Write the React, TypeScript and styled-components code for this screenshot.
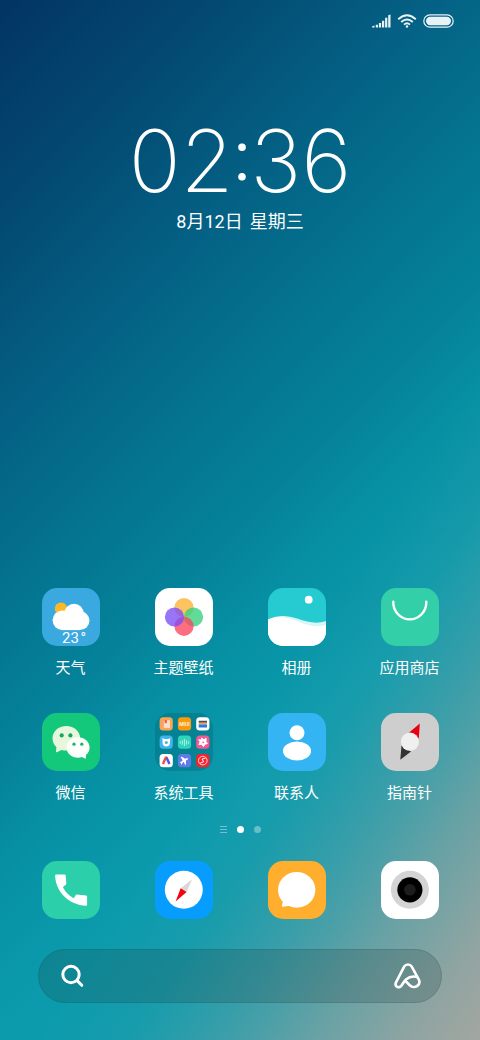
import React from "react";
import styled, { createGlobalStyle } from "styled-components";

const GlobalStyle = createGlobalStyle`
  *, *::before, *::after { box-sizing: border-box; }
  body { margin: 0; }
  button { border: 0; padding: 0; background: none; color: inherit; font: inherit; cursor: pointer; }
`;

const Screen = styled.main`
  display: flex;
  flex-direction: column;
  min-height: 100vh;
  padding-bottom: 37px;
  color: #fff;
  font-family: Roboto, "Noto Sans CJK SC", sans-serif;
  background:
    linear-gradient(
      124deg,
      rgba(163, 166, 160, 0) 62%,
      rgba(163, 166, 160, 0.08) 70%,
      rgba(163, 166, 160, 0.28) 77%,
      rgba(163, 166, 160, 0.42) 81%,
      rgba(163, 166, 160, 0.62) 86%,
      rgba(163, 166, 160, 0.87) 94%,
      rgba(163, 166, 160, 1) 100%
    ),
    linear-gradient(
      135deg,
      #033463 0%,
      #034a72 15%,
      #046084 28%,
      #047490 40%,
      #05829a 50%,
      #0791a4 58%,
      #0b9bad 68%
    );
`;

const StatusBar = styled.header`
  display: flex;
  justify-content: flex-end;
  align-items: center;
  gap: 6px;
  height: 41px;
  padding-right: 26px;
`;

const Glyph = styled.svg<{ $w: number; $h: number }>`
  display: block;
  width: ${(p) => p.$w}px;
  height: ${(p) => p.$h}px;
`;

const Clock = styled.section`
  display: flex;
  flex-direction: column;
  align-items: center;
  padding-top: 80px;
`;

const Time = styled.time`
  display: flex;
  align-items: flex-start;
  font-family: Inter, Roboto, sans-serif;
  font-size: 86px;
  font-weight: 200;
  line-height: 80px;
`;

const Colon = styled.span`
  font-family: Roboto, sans-serif;
  font-size: 68px;
  font-weight: 400;
  line-height: 72px;
`;

const DateLine = styled.p`
  display: flex;
  gap: 7px;
  margin: 8px 0 0;
  font-size: 18px;
  line-height: 26px;
`;

const Apps = styled.nav`
  display: grid;
  grid-template-columns: repeat(4, 1fr);
  row-gap: 33px;
  margin-top: auto;
  padding: 0 14px;
`;

const AppButton = styled.button`
  display: flex;
  flex-direction: column;
  align-items: center;
  gap: 10px;
`;

const Label = styled.span`
  font-size: 15px;
  line-height: 24px;
`;

const Tile = styled.svg<{ $bg: string }>`
  display: block;
  width: 58px;
  height: 58px;
  border-radius: 15px;
  background: ${(p) => p.$bg};
`;

const Pager = styled.div`
  display: flex;
  justify-content: center;
  align-items: center;
  gap: 10px;
  height: 8px;
  margin: 20px 0 28px;
`;

const Dot = styled.span<{ $active?: boolean }>`
  width: 7px;
  height: 7px;
  border-radius: 50%;
  background: ${(p) => (p.$active ? "#fff" : "rgba(255, 255, 255, 0.35)")};
`;

const Dock = styled.nav`
  display: grid;
  grid-template-columns: repeat(4, 1fr);
  padding: 0 14px;
`;

const SearchBar = styled.form`
  display: flex;
  align-items: center;
  gap: 16px;
  height: 54px;
  margin: 30px 38px 0;
  padding: 0 20px 0 22px;
  border: 1px solid rgba(40, 70, 70, 0.16);
  border-radius: 27px;
  background: rgba(30, 60, 60, 0.22);
`;

const SearchInput = styled.input`
  flex: 1;
  min-width: 0;
  border: 0;
  outline: 0;
  background: transparent;
  color: #fff;
  font: inherit;
`;

const WeatherIcon = () => (
  <Tile $bg="#3aa9e0" viewBox="0 0 58 58" aria-hidden="true">
    <circle cx="19" cy="20.7" r="6.2" fill="#fdb827" />
    <g fill="#fff">
      <circle cx="20.5" cy="32.3" r="9.9" />
      <circle cx="32" cy="25.3" r="9.6" />
      <circle cx="38" cy="32.6" r="9.5" />
      <rect x="20" y="26" width="18" height="16.1" />
    </g>
    <text x="20" y="54.5" fill="#fff" fontSize="15" fontFamily="Roboto, sans-serif">23</text>
    <text x="38.5" y="55" fill="#fff" fontSize="15" fontFamily="Roboto, sans-serif">°</text>
  </Tile>
);

const ThemesIcon = () => (
  <Tile $bg="#fff" viewBox="0 0 58 58" aria-hidden="true">
    <circle cx="29" cy="19.5" r="9.6" fill="#fcb63f" fillOpacity=".82" />
    <circle cx="38.5" cy="29" r="9.6" fill="#36cf7d" fillOpacity=".78" />
    <circle cx="29" cy="38.3" r="9.6" fill="#fb4660" fillOpacity=".78" />
    <circle cx="19.5" cy="29" r="9.6" fill="#7b4df3" fillOpacity=".78" />
  </Tile>
);

const GalleryIcon = () => (
  <Tile $bg="#25cbd1" viewBox="0 0 58 58" aria-hidden="true">
    <circle cx="40.7" cy="11.7" r="3.9" fill="#fff" />
    <path d="M0 31.5C10 27 18 27 29 30.5S48 36.500 58 33V58H0Z" fill="#d8f6f5" />
    <path d="M0 31.5C9 27.500 16 28.500 27 32.500S47 40.500 58 37V58H0Z" fill="#fff" />
  </Tile>
);

const StoreIcon = () => (
  <Tile $bg="#33cfa8" viewBox="0 0 58 58" aria-hidden="true">
    <path d="M12.3 13.8C12 23 19 31.400 28.800 31.400S45.600 23 45.300 13.800" fill="none" stroke="#fff" strokeWidth="2.4" strokeLinecap="round" />
  </Tile>
);

const WeChatIcon = () => (
  <Tile $bg="#14c87b" viewBox="0 0 58 58" aria-hidden="true">
    <path d="M24.300 13C32 13 38.200 18.500 38.200 25.300S32 37.600 24.300 37.600C22.500 37.600 21 37.400 19.600 36.900L14.800 39.200C14.200 39.400 13.900 39 14 38.500L14.400 34.300C12 32 10.500 28.800 10.500 25.300C10.500 18.500 16.600 13 24.300 13Z" fill="#e8f6dc" />
    <circle cx="19.700" cy="22.400" r="2.100" fill="#14a866" />
    <circle cx="28.400" cy="22.400" r="2.100" fill="#14a866" />
    <path d="M36 24.200C29.500 24.200 24.500 28.900 24.500 34.500S29.500 44.800 36 44.800C37.500 44.800 38.900 44.500 40.100 44L42.900 45.500C43.500 45.800 43.900 45.500 43.900 44.900V42C46.200 40.200 47.600 37.500 47.600 34.500C47.600 28.900 42.500 24.200 36 24.200Z" fill="#fcfffa" />
    <circle cx="32" cy="31.200" r="1.600" fill="#14b56d" />
    <circle cx="39.800" cy="31.200" r="1.600" fill="#14b56d" />
  </Tile>
);

const minis = ["#f8a750", "#fa9a0c", "#ffffff", "#3db4ee", "#2fd3b8", "#f05a94", "#ffffff", "#5f7be8", "#f6222e"];

const FolderIcon = () => (
  <Tile $bg="rgba(0, 90, 105, 0.3)" viewBox="0 0 58 58" aria-hidden="true">
    {minis.map((color, i) => (
      <rect key={i} x={4.6 + (i % 3) * 18.3} y={4.2 + Math.floor(i / 3) * 18.4} width="13.200" height="13.200" rx="3.500" fill={color} />
    ))}
    <path d="M7.300 7.200H15V15H7.300Z" fill="#ffdcc4" />
    <path d="M8 7V15" fill="none" stroke="#f3744a" strokeWidth="1" />
    <path d="M9.700 7H11.700V10.500L10.700 9.700L9.700 10.500Z" fill="#ee4f3c" />
    <text x="29.500" y="12.600" fill="#fff" fontSize="5" fontWeight="500" textAnchor="middle" fontFamily="Roboto, sans-serif">MIUI</text>
    <path d="M43.700 7.800H52V9.800H43.700Z" fill="#4a4f66" />
    <path d="M43.700 9.800H52V11.500H43.700Z" fill="#f8a040" />
    <path d="M43.700 11.500H52V14.600H43.700Z" fill="#2879e8" />
    <path d="M7.300 25L9.300 26H13.300L15.300 25L15 28.500V31Q14 33.500 11.300 33.500T7.600 31V28.500Z" fill="#fff" />
    <circle cx="11.300" cy="29.500" r="1.500" fill="#3db4ee" />
    <path d="M25.200 28.700V30.300M27.300 27.700V31.300M29.400 26.300V32.700M31.500 27.700V31.300M33.600 28.700V30.300" stroke="#d8fbf4" strokeWidth=".8" strokeLinecap="round" />
    <path d="M46.500 25L48.800 26.600L51.200 25.300L51 28.500L52.600 30.500L50 31.300L48.500 33.500L46.700 31.500L43.800 31.500L45 28.800L43.700 26.700L46.300 27Z" fill="#fff" stroke="#fff" strokeWidth=".8" strokeLinejoin="round" />
    <circle cx="48.200" cy="29.300" r=".9" fill="#f05a94" />
    <path d="M8 51L10.300 45.500Q11.200 43.600 12.100 45.500" fill="none" stroke="#f04d48" strokeWidth="2.400" strokeLinejoin="round" />
    <path d="M11.600 44.800L14.500 51" fill="none" stroke="#5456e8" strokeWidth="2.500" />
    <path d="M26 43.800L27.300 44L30 45.700L32.600 45L33.300 46L31 47.500L30.900 51.500L30 52L28.900 48.700L27.300 50L27 51.600L26.300 51.500L25.800 50L24.600 49L26.200 48.700L27.700 47.200L26 44.800Z" fill="#fff" />
    <circle cx="47.800" cy="47.600" r="4.300" fill="none" stroke="#fff" strokeWidth=".8" />
    <path d="M50.500 45L47 46.200L48.700 48.700L45.200 50.200" fill="none" stroke="#fff" strokeWidth="1" />
  </Tile>
);

const ContactsIcon = () => (
  <Tile $bg="#34b4f2" viewBox="0 0 58 58" aria-hidden="true">
    <circle cx="29" cy="19.700" r="7.500" fill="#fff" />
    <ellipse cx="29" cy="38" rx="14.100" ry="9.400" fill="#fff" />
  </Tile>
);

const CompassIcon = () => (
  <Tile $bg="#cecece" viewBox="0 0 58 58" aria-hidden="true">
    <path d="M38.800 10.500L27 20.500L37.800 25.500Z" fill="#e60012" />
    <path d="M19.300 46.800L20.500 32.500L30 38.500Z" fill="#333" />
    <circle cx="28.900" cy="28.700" r="9.100" fill="#f0f0f0" />
  </Tile>
);

const PhoneIcon = () => (
  <Tile $bg="#2bcfaa" viewBox="0 0 58 58" aria-hidden="true">
    <path d="M14.300 13.500H22.500Q23.600 13.500 23.700 14.600L24.300 22.300Q24.400 23 23.900 23.500L20.900 26.200Q24.600 33.200 31.700 37.200L33.800 34Q34.200 33.400 34.900 33.500L44 34.600Q45.100 34.700 45.100 35.800V43.700Q45.100 44.900 43.900 44.800C27 44 13.700 31 13.100 14.800Q13.100 13.500 14.300 13.500Z" fill="#fff" />
  </Tile>
);

const BrowserIcon = () => (
  <Tile $bg="#069dff" viewBox="0 0 58 58" aria-hidden="true">
    <circle cx="28.800" cy="28.800" r="19" fill="#fff" />
    <path d="M37.200 18.200L25.700 27.300L31.600 31.100Z" fill="#d8d8d8" />
    <path d="M20.600 40.400L25.700 27.300L31.600 31.100Z" fill="#f5000c" />
  </Tile>
);

const MessagesIcon = () => (
  <Tile $bg="#ffae2e" viewBox="0 0 58 58" aria-hidden="true">
    <ellipse cx="28.700" cy="28.800" rx="18.700" ry="17.900" fill="#fff" />
    <path d="M15.500 38L13.900 45Q13.900 45.900 14.800 45.700L24 44.500Z" fill="#fff" />
  </Tile>
);

const CameraIcon = () => (
  <Tile $bg="#fff" viewBox="0 0 58 58" aria-hidden="true">
    <circle cx="28.900" cy="28.800" r="19" fill="#d4d4d4" />
    <circle cx="28.900" cy="28.800" r="12.600" fill="#000" />
    <circle cx="28.900" cy="28.800" r="5.800" fill="#1d1d1d" />
  </Tile>
);

const apps = [
  { name: "天气", Icon: WeatherIcon },
  { name: "主题壁纸", Icon: ThemesIcon },
  { name: "相册", Icon: GalleryIcon },
  { name: "应用商店", Icon: StoreIcon },
  { name: "微信", Icon: WeChatIcon },
  { name: "系统工具", Icon: FolderIcon },
  { name: "联系人", Icon: ContactsIcon },
  { name: "指南针", Icon: CompassIcon },
];

const dock = [
  { name: "电话", Icon: PhoneIcon },
  { name: "浏览器", Icon: BrowserIcon },
  { name: "短信", Icon: MessagesIcon },
  { name: "相机", Icon: CameraIcon },
];

export default function App() {
  return (
    <>
      <GlobalStyle />
      <Screen>
        <StatusBar>
          <Glyph $w={19} $h={14} viewBox="0 0 19 14" fill="#e9f2f5" aria-hidden="true">
            <path d="M0 13.500V12.500L2.500 11.600V13.500ZM3.800 10.800H6V13.500H3.800ZM6.900 9H9.100V13.500H6.900ZM10 6.700H12.200V13.500H10ZM13.100 3.800H15.300V13.500H13.100ZM16.200 1.300L18.500 .6V13.500H16.200Z" />
          </Glyph>
          <Glyph $w={20} $h={14} viewBox="0 0 20 14" fill="none" stroke="#e9f2f5" strokeWidth="1.900" aria-hidden="true">
            <path d="M1.200 5.200Q10 -2.800 18.800 5.200M4.200 8Q10 2.800 15.800 8M7 10.600Q10 8 13 10.600" />
            <circle cx="10" cy="12.500" r="1.200" fill="#e9f2f5" stroke="none" />
          </Glyph>
          <Glyph $w={31} $h={14} viewBox="0 0 31 14" aria-hidden="true">
            <rect x=".8" y=".8" width="29.400" height="12.400" rx="6.200" fill="none" stroke="#e9f2f5" strokeWidth="1.200" />
            <rect x="3" y="2.800" width="25" height="8.400" rx="4.200" fill="#e9f2f5" />
          </Glyph>
        </StatusBar>

        <Clock>
          <Time dateTime="02:36">
            <span>02</span>
            <Colon>:</Colon>
            <span>36</span>
          </Time>
          <DateLine>
            <span>8月12日</span> <span>星期三</span>
          </DateLine>
        </Clock>

        <Apps aria-label="应用">
          {apps.map(({ name, Icon }) => (
            <AppButton key={name} type="button">
              <Icon />
              <Label>{name}</Label>
            </AppButton>
          ))}
        </Apps>

        <Pager>
          <Glyph $w={7} $h={8} viewBox="0 0 7 8" stroke="#fff" strokeOpacity=".4" aria-hidden="true">
            <path d="M0 1.500H7M0 4.500H7M0 7.500H7" />
          </Glyph>
          <Dot $active />
          <Dot />
        </Pager>

        <Dock aria-label="快捷栏">
          {dock.map(({ name, Icon }) => (
            <AppButton key={name} type="button" aria-label={name}>
              <Icon />
            </AppButton>
          ))}
        </Dock>

        <SearchBar role="search">
          <button type="submit" aria-label="搜索">
            <Glyph $w={24} $h={24} viewBox="0 0 24 24" fill="none" stroke="#fff" strokeWidth="3" strokeLinecap="round" aria-hidden="true">
              <circle cx="10" cy="10.500" r="8.200" />
              <path d="M16.400 16.900L20.800 21.300" />
            </Glyph>
          </button>
          <SearchInput type="text" aria-label="搜索内容" />
          <button type="button" aria-label="小爱同学">
            <Glyph $w={27} $h={26} viewBox="0 0 27 26" fill="none" stroke="#fff" strokeWidth="2.600" strokeLinecap="round" strokeLinejoin="round" aria-hidden="true">
              <path d="M12.200 18.800L16 22.500C17.800 24.200 21 24.600 23.300 22.900C25.600 21.200 25.900 18.700 24.700 16.400L17.600 3.400C16 .8 11.900 .8 10.300 3.400L2 19.300C.5 22.300 3 25 5.800 24C8.500 22.800 8.900 19.200 12 16.500C15 13.900 18.800 13 22.700 13.900" />
            </Glyph>
          </button>
        </SearchBar>
      </Screen>
    </>
  );
}
